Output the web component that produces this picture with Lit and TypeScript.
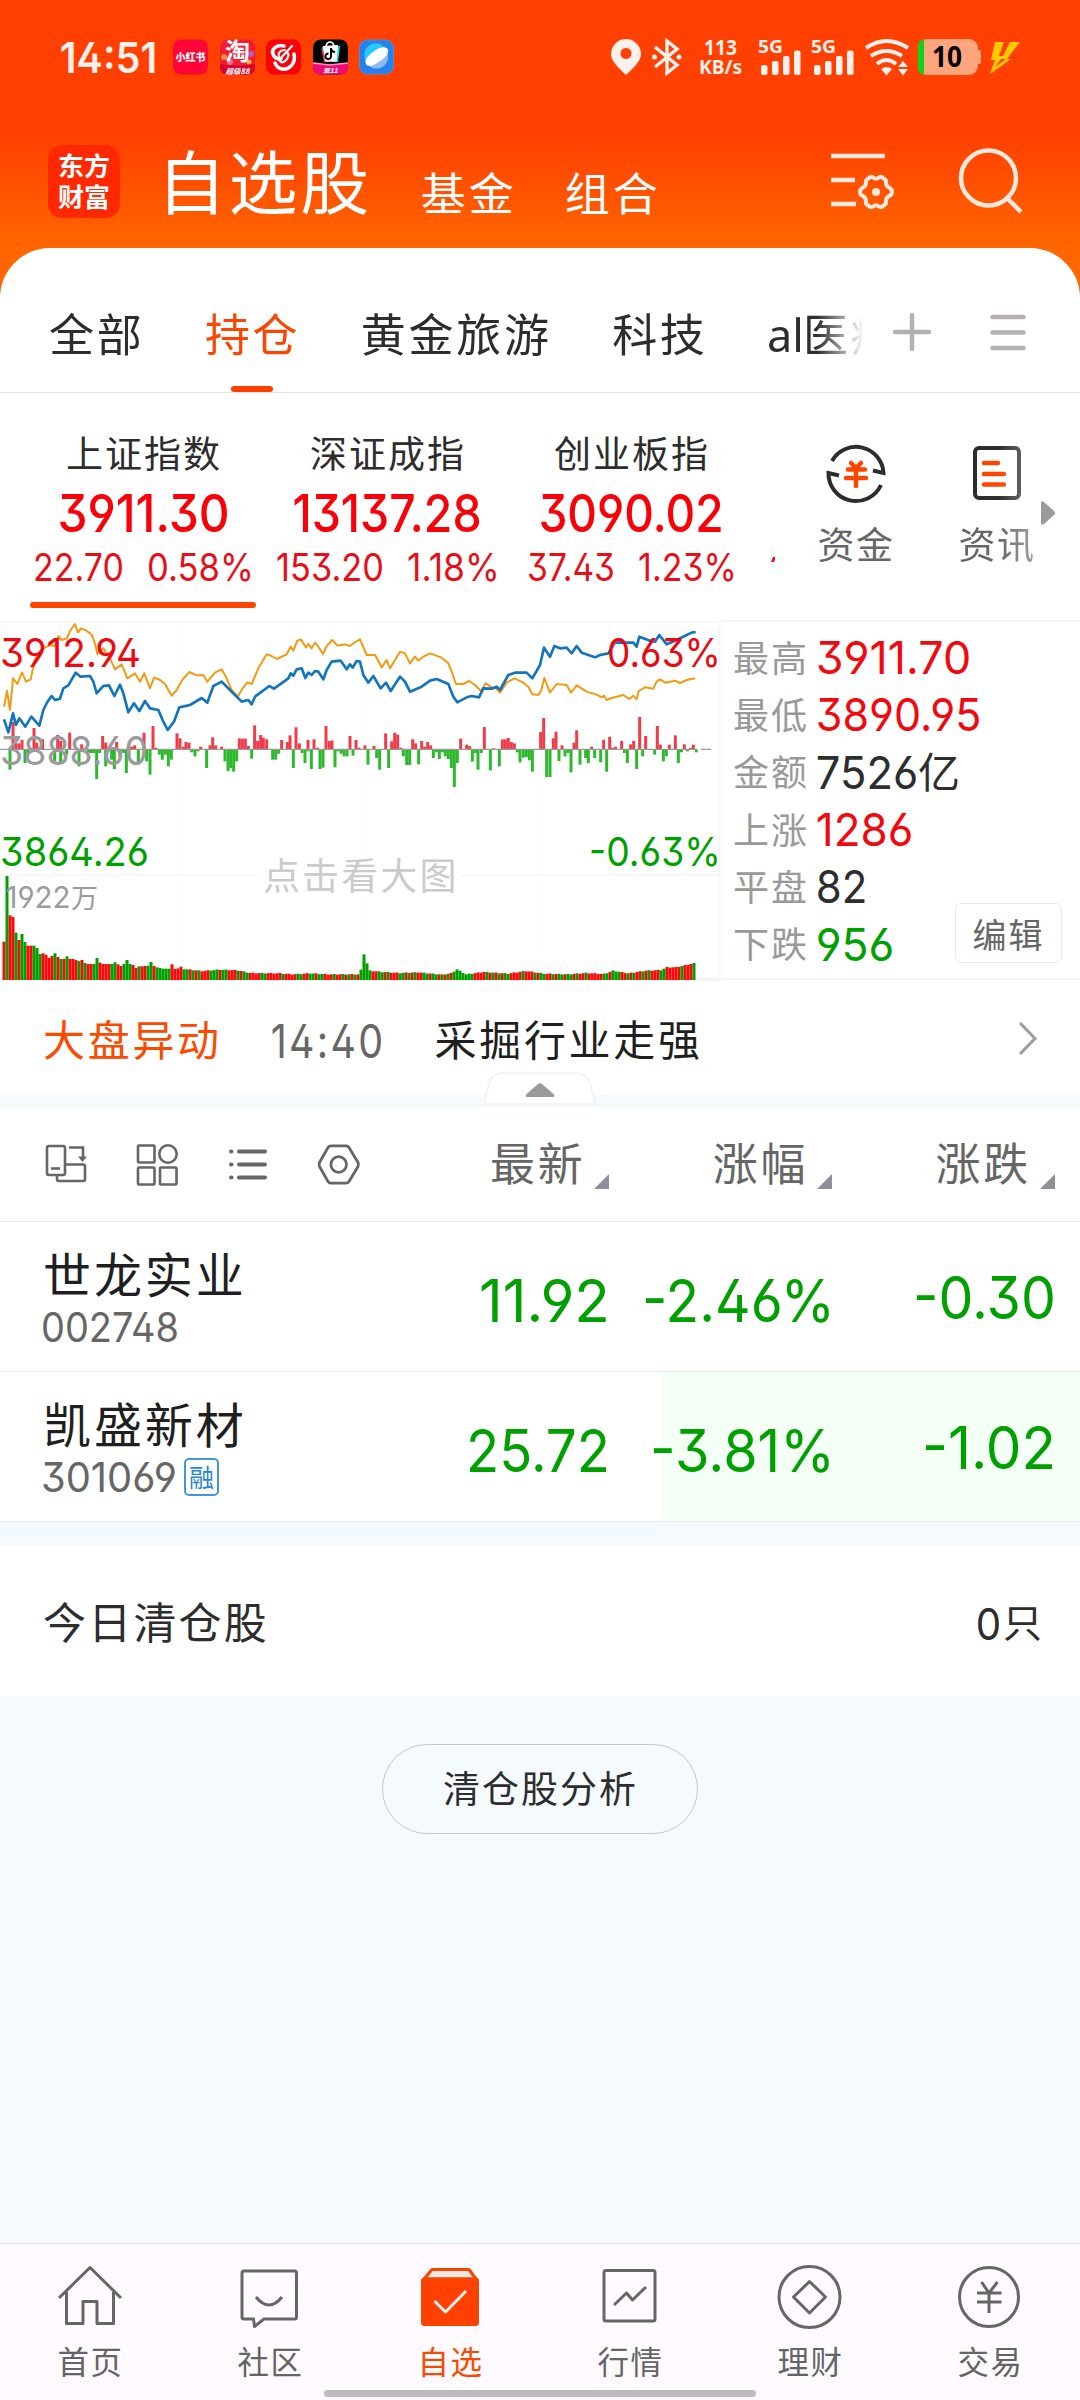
import { LitElement, html, svg, css, nothing } from "lit";
import { customElement } from "lit/decorators.js";

/* Numerals set to an exact measure: the box equals the digits' ink box. */
const num = (text: string, width: number, cap: number, cls = "") => {
  const size = cap / 0.727;
  return html`<svg class="num ${cls}" width=${width} height=${cap} viewBox="0 0 ${width} ${cap}">
    <text x=${-size * 0.05} y=${cap} font-size=${size} textLength=${width + size * 0.1} lengthAdjust="spacingAndGlyphs">${text}</text>
  </svg>`;
};

const numCss = css`
  .num { display: block; overflow: visible; flex: none; fill: currentColor; font-family: Inter, "Noto Sans", sans-serif; font-feature-settings: "cv03", "cv04", "ss01"; }
  .num.medium { font-weight: 500; }
  .num.semi { font-weight: 600; }
  svg { display: block; flex: none; overflow: visible; }
`;

const YELLOW = "12,290 21,243 30,300 39,205 52,222 66,187 78,215 92,208 104,150 115,130 135,112 150,105 165,108 175,78 185,90 200,85 212,60 225,42 234,67 243,55 260,62 275,74 285,100 292,132 310,115 330,145 345,178 365,163 382,205 405,190 420,215 433,190 450,235 462,203 480,210 495,222 515,257 530,240 545,212 568,186 590,196 610,195 622,215 645,188 665,178 680,205 695,240 713,260 728,235 742,217 755,222 775,175 800,133 815,138 830,147 860,133 872,110 880,122 892,92 902,88 918,112 925,102 935,115 945,98 955,110 969,132 980,108 997,90 1012,107 1035,103 1050,108 1066,96 1080,88 1100,135 1125,135 1145,172 1160,150 1170,175 1185,150 1200,125 1215,130 1230,160 1245,140 1255,152 1270,140 1290,130 1325,143 1345,160 1355,185 1368,222 1390,222 1407,213 1425,225 1443,243 1457,220 1475,232 1488,235 1500,248 1520,218 1543,205 1570,218 1585,230 1597,253 1615,255 1623,243 1633,204 1650,248 1670,222 1700,225 1713,248 1730,226 1760,245 1790,254 1805,262 1812,257 1820,270 1835,264 1870,255 1888,267 1900,257 1910,268 1916,243 1935,232 1960,236 1970,215 1980,208 1995,218 2025,212 2040,219 2060,210 2085,205";
const BLUE = "12,328 25,367 39,310 48,345 58,325 76,350 94,320 118,347 130,300 142,276 155,258 165,270 180,266 190,235 205,226 227,188 242,200 270,198 280,215 290,250 310,228 327,226 343,258 360,224 370,250 385,307 402,280 418,303 435,273 450,295 475,300 490,335 503,360 522,335 538,292 570,285 605,264 622,278 640,228 665,215 690,240 725,275 745,270 755,283 765,260 808,228 822,236 865,205 872,190 880,197 890,178 905,175 916,204 925,188 935,195 945,183 955,185 970,208 980,180 995,155 1022,152 1040,178 1050,163 1058,173 1070,153 1080,155 1090,195 1105,218 1120,198 1142,235 1158,218 1172,243 1200,200 1215,215 1230,245 1265,230 1290,212 1310,207 1345,222 1360,260 1372,277 1400,262 1415,258 1437,262 1450,235 1475,236 1490,230 1500,240 1525,195 1545,188 1580,188 1597,205 1620,165 1632,113 1650,140 1663,108 1680,115 1700,113 1715,130 1730,108 1745,128 1785,142 1800,135 1825,130 1845,98 1900,98 1910,110 1918,80 1950,92 1965,95 1978,75 2000,103 2030,90 2060,75 2075,68 2087,66";
const UP = "39:82,48:18,57:18,66:28,102:64,110:20,128:30,173:43,182:25,209:50,227:5,245:15,308:40,317:20,350:22,395:8,404:12,432:50,459:70,468:5,531:48,540:33,550:8,558:22,567:20,602:8,630:12,638:36,647:12,665:8,718:33,727:32,736:32,745:10,764:72,773:25,782:43,790:35,800:30,845:28,862:22,870:42,888:66,898:18,924:28,942:30,953:5,978:70,988:25,996:27,1050:40,1068:28,1077:5,1095:12,1122:10,1157:48,1175:24,1184:50,1193:44,1203:5,1238:30,1247:18,1265:25,1274:8,1283:22,1292:12,1382:32,1400:14,1409:10,1453:67,1480:3,1507:30,1516:30,1525:34,1534:22,1543:18,1622:52,1631:94,1660:33,1668:53,1686:12,1722:20,1730:57,1775:8,1811:29,1829:38,1838:5,1847:8,1865:25,1892:15,1901:25,1919:97,1937:40,1972:70,1981:14,2008:14,2026:42,2053:15,2071:4,2080:14";
const DOWN = "30:60,75:40,84:10,164:35,182:40,200:15,237:50,246:5,265:8,272:10,281:10,290:88,299:10,317:50,335:30,343:58,360:20,370:10,379:70,387:20,415:40,440:35,450:75,478:15,487:30,496:15,505:50,514:30,575:8,585:20,594:5,620:55,675:35,684:64,692:56,701:66,710:35,755:27,818:30,827:30,836:12,880:55,906:10,915:40,924:5,934:58,960:58,969:54,1005:53,1014:5,1023:12,1032:20,1041:20,1059:18,1104:45,1130:25,1139:60,1166:55,1210:20,1220:46,1229:46,1256:44,1300:25,1309:8,1318:28,1327:8,1336:20,1345:28,1354:55,1363:112,1372:40,1417:36,1426:10,1434:60,1444:10,1471:62,1498:50,1552:8,1560:38,1570:24,1579:22,1588:32,1597:66,1640:82,1650:82,1677:34,1695:20,1704:10,1713:68,1740:45,1757:25,1765:40,1784:25,1802:38,1820:66,1873:10,1882:40,1910:58,1928:20,1964:15,1990:35,1999:20,2035:40,2044:8,2062:5,2089:8";
const pairs = (s: string) => s.split(",").map((p) => p.split(":").map(Number));

/* Minute volumes: the opening burst bar by bar, then anchors joined linearly. */
const OPEN_VOL = "r115,g312,r194,r189,g142,r120,g138,g114,r103,r103,g103,g96,g78,r80,r76,r66,r72,g80,r69,g63,r63,g71,r63,r63,r60,g57,r60,g51,r48,r48,g48,g66,r52,r48,r48,r48,g48,g53,r47,r42,g48,g60,g48,r45,r36,g41,r41,r42,g43,g54,r42,g38,g36,g34,g34,g34,r47,r33,r35,r40";
const VOL_ANCHORS = [[60, 33], [66, 27], [72, 31], [78, 29], [82, 21], [92, 20], [96, 17], [102, 20], [108, 17], [118, 17], [119, 30], [120, 78], [121, 50], [122, 28], [126, 24], [132, 21], [138, 23], [146, 16], [149, 20], [151, 32], [154, 17], [160, 24], [168, 19], [174, 27], [180, 19], [188, 17], [194, 21], [200, 18], [203, 28], [208, 20], [214, 28], [219, 30], [221, 38], [224, 38], [228, 46], [230, 50]];
const volumes = (() => {
  const out = OPEN_VOL.split(",").map((v) => ({ up: v[0] === "r", h: Number(v.slice(1)) }));
  const hues = "ggrgrgrrrgggrggrrrgrggrrrrggrrrrrgrrrrggrrggrggrrrgrrgrgrgrg" + "gggrrggrgrrrggrgrgrrggrggrgrgrgggggggrrrrgrgrgrgg" + "rrrrgrrrgrggrrgrggrggrgrrgrrrrrggrgggrrgrgrrgrgrrrggrrrrrgrrrrrg";
  for (let i = out.length; i <= 230; i++) {
    const k = VOL_ANCHORS.findIndex((a) => a[0] >= i);
    const [x1, y1] = VOL_ANCHORS[k];
    const [x0, y0] = VOL_ANCHORS[Math.max(0, k - 1)];
    const h = x1 === x0 ? y1 : y0 + ((y1 - y0) * (i - x0)) / (x1 - x0);
    out.push({ up: i === 120 || i === 230 ? false : hues[(i - 60) % hues.length] === "r", h: h + ((i * 7) % 3) - 1 });
  }
  return out;
})();

@customElement("market-chart")
export class MarketChart extends LitElement {
  static styles = [numCss, css`
    :host { display: block; position: relative; width: 720px; height: 360px; }
    .over { position: absolute; }
    .hi { left: 2px; top: 18px; color: #ec0a12; }
    .mid { left: 2px; top: 116px; color: #9c9a9c; }
    .lo { left: 2px; top: 217px; color: #00a000; }
    .hip { right: 1px; top: 18px; color: #e60a14; }
    .lop { right: 1px; top: 217px; color: #00a000; }
    .vol { left: 7px; top: 259px; display: flex; gap: 2px; align-items: center; height: 36px; color: #9c9a9c; }
    .cjk { font: 27px/36px "Noto Sans CJK SC", sans-serif; }
    .hint { left: 263px; top: 227px; font: 37px/54px "Noto Sans CJK SC", sans-serif; letter-spacing: 2.1px; color: #cbcbcb; }
  `];
  render() {
    return html`
      <svg width="720" height="362" viewBox="0 30 2160 1086">
        <g fill="none" stroke="#f5f5f5" stroke-width="5">
          <path d="M0 36H2160M0 795H770M1383 795H2160M2159 36V1110M0 1111H2160" />
          <path stroke-width="3" stroke-dasharray="3 7" d="M550 40V1110M1087 40V1110M1624 40V1110" />
        </g>
        <g fill="#f03c48">${pairs(UP).map(([x, h]) => svg`<rect x=${x - 4.5} y=${418 - h} width="9" height=${h} />`)}</g>
        <g fill="#2db92d">${pairs(DOWN).map(([x, h]) => svg`<rect x=${x - 4.5} y="419" width="9" height=${h} />`)}</g>
        <path d="M0 418H2092M2103 418H2133" stroke="#9a9a9a" stroke-width="4" />
        <polyline points=${YELLOW} fill="none" stroke="#f09b12" stroke-width="6" stroke-linejoin="round" />
        <polyline points=${BLUE} fill="none" stroke="#1474bc" stroke-width="8" stroke-linejoin="round" />
        ${volumes.map((v, i) => svg`<rect x=${7.5 + i * 9} y=${1110 - v.h} width="9" height=${v.h} fill=${v.up ? "#fa0a0a" : "#00a000"} />`)}
      </svg>
      <div class="over hi">${num("3912.94", 137, 28.5)}</div>
      <div class="over mid">${num("3888.60", 144, 28.5)}</div>
      <div class="over lo">${num("3864.26", 145, 28.5)}</div>
      <div class="over hip">${num("0.63%", 110, 28.5)}</div>
      <div class="over lop">${num("-0.63%", 128, 28.5)}</div>
      <div class="over vol">${num("1922", 62, 22)}<span class="cjk">万</span></div>
      <div class="over hint">点击看大图</div>`;
  }
}

@customElement("status-bar")
export class StatusBar extends LitElement {
  static styles = [numCss, css`
    :host { display: flex; align-items: center; box-sizing: border-box; height: 75px; padding: 39px 60px 0 62px; color: #fff0eb; }
    .apps { display: flex; gap: 11.5px; margin-left: 18px; }
    .sys { display: flex; margin-left: auto; }
    .sys svg { font-family: "Noto Sans", sans-serif; font-weight: 700; }
  `];
  render() {
    return html`
      ${num("14:51", 93, 31, "semi")}
      <div class="apps">
        <svg width="35" height="36" viewBox="0 0 35 36"><rect y=".5" width="35" height="35" rx="8" fill="#ff0436"/><text x="17.5" y="22" text-anchor="middle" font-family="Noto Sans CJK SC, sans-serif" font-weight="900" font-size="10" fill="#fff">小红书</text></svg>
        <svg width="35" height="36" viewBox="0 0 35 36"><rect y=".5" width="35" height="35" rx="8" fill="#f01e32"/><circle cx="4" cy="18" r="3" fill="#ff8a3c"/><circle cx="31" cy="15" r="3" fill="#b45ad8"/><circle cx="29" cy="23" r="2.5" fill="#ffb43c"/><circle cx="10" cy="23" r="3" fill="#ff6e96"/><path d="M0 25Q17 28 35 25V28Q35 35.500 27 35.500H8Q0 35.500 0 28Z" fill="#d8002d"/><text x="17.500" y="21" text-anchor="middle" font-family="Noto Sans CJK SC, sans-serif" font-weight="700" font-size="24" textLength="25" lengthAdjust="spacingAndGlyphs" fill="#fff">淘</text><text x="17.500" y="34.500" text-anchor="middle" font-family="Noto Sans CJK SC, sans-serif" font-style="italic" font-weight="700" font-size="7.500" fill="#fff">超级88</text></svg>
        <svg width="35" height="36" viewBox="0 0 35 36"><rect y=".5" width="35" height="35" rx="8" fill="#fa000a"/><g fill="none" stroke="#fff" stroke-linecap="round"><path stroke-width="3.500" d="M18 7C10 5 5 11 7 15C8 19 12 20 15 20"/><path stroke-width="3.500" d="M9 24C12 31 20 32 25 27C29 23 29 19 28 15"/><path stroke-width="2.200" d="M26 7L14 20C13 24 17 24 19 22C22 20 23 16 22 14M19 11C14 11 12 14 13 17"/></g></svg>
        <svg width="35" height="36" viewBox="0 0 35 36"><rect y=".5" width="35" height="35" rx="8" fill="#000"/><path d="M0 24L17 26L35 24V28Q35 35.500 27 35.500H8Q0 35.500 0 28Z" fill="#f00a78"/><path d="M0 24L17 26L35 24" stroke="#ff96b4" stroke-width="1.500" fill="none"/><path d="M9 8L12 23L25 23L27 7Z" fill="#1ee6e6"/><path d="M8 9L11 23H20Z" fill="#ff2864"/><path d="M10 7L25 6L23.500 22.500H12Z" fill="#fff"/><path d="M13 7Q14 3 17 3Q20 3 21 7" stroke="#fff" stroke-width="1.700" fill="none"/><path d="M18 9V17A2.800 2.800 0 1 1 15.500 14.500M18 10Q19 13 22 13" fill="none" stroke="#000" stroke-width="2"/><text x="17.500" y="34" text-anchor="middle" font-family="Noto Sans CJK SC, sans-serif" font-style="italic" font-weight="900" font-size="6.500" fill="#fff">双11</text></svg>
        <svg width="35" height="36" viewBox="0 0 35 36"><rect x=".5" y="1" width="34" height="34" rx="8" fill="#2382eb" stroke="#5a8cd2"/><circle cx="17.500" cy="18" r="11.500" fill="#8cb9f5"/><path d="M6 20A11.500 11.500 0 0 1 26 9L10 21Z" fill="#28c8ff"/><path d="M7 25C5 21 9 16 16 11.500C22 7.500 28 7 29 11C30 15 25 20 19 23.500C14 27 9 28.500 7 25Z" fill="#fff"/></svg>
      </div>
      <div class="sys">
        <svg width="410" height="38" viewBox="610 38 410 38" fill="#fff0eb">
          <path fill-rule="evenodd" d="M626 39a15 15 0 0 1 15 15c0 8-9 15-15 21c-6-6-15-13-15-21a15 15 0 0 1 15-15Zm0 9a5.500 5.500 0 1 0 .01 0Z"/>
          <g fill="none" stroke="#fff0eb" stroke-width="3.400"><path d="M655 47L677 65L667 73V41L677 49L655 67"/></g><circle cx="654.500" cy="57" r="2.500"/><circle cx="679" cy="57" r="2.500"/>
          <text x="704" y="55" font-size="21" textLength="33" lengthAdjust="spacingAndGlyphs">113</text>
          <text x="699" y="74" font-size="19" textLength="43" lengthAdjust="spacingAndGlyphs">KB/s</text>
          ${[0, 53].map((d) => svg`<g transform="translate(${d} 0)"><text x="758" y="52.500" font-size="18" textLength="25" lengthAdjust="spacingAndGlyphs">5G</text><rect x="761" y="65" width="6.500" height="10" rx="2"/><rect x="772" y="61" width="6.500" height="14" rx="2"/><rect x="783" y="56" width="6.500" height="19" rx="2"/><rect x="794" y="50.500" width="6.500" height="24.500" rx="2"/></g>`)}
          <g fill="none" stroke="#fff0eb" stroke-width="4"><path d="M866 48Q886.500 34 908 48M871 56Q886.500 46 902 56M877 64Q886.500 56 896 64"/></g>
          <path d="M881 69Q886.500 65 892 69L886.500 75.500ZM898 67L903 61L908 67ZM898 69H908L903 75.500Z"/>
          <rect x="918" y="39" width="60" height="36" rx="9" fill="#ffa57d"/><rect x="976" y="50" width="5" height="14" rx="2" fill="#ffa57d"/>
          <path d="M924 39V75Q918 74 918 66V48Q918 40 924 39Z" fill="#0cd41e"/>
          <text x="932" y="67" font-size="28" fill="#000" textLength="30" lengthAdjust="spacingAndGlyphs">10</text>
          <path d="M995 42H1004L999 56H1003L1010 42H1020L1007 59H1011L990 74L995 60H991ZM1001 59L995 67L1006 59Z" fill="#ffc800"/>
        </svg>
      </div>`;
  }
}

const NAV = [
  ["首页", svg`<path d="M9 38L40 7.500L71 38M16.500 32V63.500H33V41.500H47V63.500H63.500V32"/>`],
  ["社区", svg`<path d="M14 11H64.500Q66.500 11 66.500 13V57Q66.500 59 64.500 59H34L24.500 66.500L23.500 59H14Q12 59 12 57V13Q12 11 14 11ZM26 37Q39 53 52 37"/>`],
  ["自选", svg`<path d="M22 9.500H59L66 19H14Z" fill="#f0e8e4"/><rect x="12.500" y="19" width="55" height="45.500" rx="2" fill="#ff4000"/><path d="M24.500 41L35.500 52L56 31" stroke="#fff0e8"/>`],
  ["行情", svg`<rect x="14" y="10.500" width="51" height="50.500" rx="2"/><path d="M24 45L36.500 33L42.500 40L56 27"/>`],
  ["理财", svg`<circle cx="39.500" cy="37" r="30.500"/><path d="M39.500 21.500L55.500 37L39.500 53L23.500 37Z"/>`],
  ["交易", svg`<circle cx="39" cy="37" r="29.500"/><path d="M31.500 22L39 33L47.500 22M39 33V53M27 33H51.500M27 42H51.500"/>`],
] as const;

const INDICES = [
  { name: "上证指数", v: ["3911.30", 167], a: ["22.70", 87], b: ["0.58%", 103], on: true },
  { name: "深证成指", v: ["13137.28", 184], a: ["153.20", 104], b: ["1.18%", 89] },
  { name: "创业板指", v: ["3090.02", 180], a: ["37.43", 84], b: ["1.23%", 95] },
] as { name: string; v: [string, number]; a: [string, number]; b: [string, number]; on?: boolean }[];

const STATS: [string, string, number, string, string?][] = [
  ["最高", "3911.70", 151, "red"],
  ["最低", "3890.95", 161, "red"],
  ["金额", "7526", 98, "ink", "亿"],
  ["上涨", "1286", 93, "red"],
  ["平盘", "82", 47, "ink"],
  ["下跌", "956", 74, "green"],
];

const STOCKS = [
  { name: "世龙实业", code: ["002748", 134], last: ["11.92", 125], pct: ["-2.46%", 187], chg: ["-0.30", 137] },
  { name: "凯盛新材", code: ["301069", 132], last: ["25.72", 138], pct: ["-3.81%", 179], chg: ["-1.02", 128], flash: true },
] as { name: string; code: [string, number]; last: [string, number]; pct: [string, number]; chg: [string, number]; flash?: boolean }[];

@customElement("app-root")
export class AppRoot extends LitElement {
  static styles = [numCss, css`
    :host { display: flex; flex-direction: column; width: 1080px; height: 2400px; overflow: hidden; box-sizing: border-box;
      font-family: "Noto Sans CJK SC", sans-serif; color: #2d2d2d; background: #f5faff; }
    * { box-sizing: border-box; white-space: nowrap; }
    .red { color: #f00a10; } .green { color: #00a000; } .ink { color: #2d2d2d; }
    .top { height: 300px; flex: none; background: linear-gradient(#ff4000 135px, #ff6600 249px); color: #fff; margin-bottom: -52px; }
    .title { display: flex; align-items: flex-start; height: 104px; padding: 0 60px 0 48px; margin-top: 60px; }
    .logo { width: 72px; height: 73px; margin-top: 10px; border-radius: 14px; background: #ff2800; display: grid; place-content: center; text-align: center; font-weight: 700; font-size: 26px; line-height: 31px; padding-bottom: 3px; }
    .t1 { font-size: 69px; line-height: 100px; letter-spacing: 2.600px; margin: -6px 0 0 37px; }
    .t2 { font-size: 45px; line-height: 66px; letter-spacing: 3px; margin: 24px 0 0 49px; }
    .t2 + .t2 { margin-left: 48px; }
    .title .filter { margin: 17px 64px 0 auto; }
    .title .search { margin: 15px -2px 0 0; }
    .sheet { position: relative; flex: none; height: 1448px; background: #fff; border-radius: 50px 50px 0 0; display: flex; flex-direction: column; }
    .tabs { height: 145px; border-bottom: 1px solid #e4e4e4; display: flex; align-items: stretch; padding-left: 49px; font-size: 45px; line-height: 66px; letter-spacing: 2.700px; }
    .strip { display: flex; width: 817px; overflow: hidden; -webkit-mask-image: linear-gradient(90deg, #000 768px, transparent 815px); mask-image: linear-gradient(90deg, #000 768px, transparent 815px); }
    .tab { flex: none; display: flex; flex-direction: column; align-items: center; padding-top: 52px; margin-right: 60.500px; }
    .tab.on { color: #fa4600; }
    .tab.on::after { content: ""; width: 42px; height: 6px; border-radius: 3px; background: #ff4000; margin: 20px 2px 0 0; }
    .latin { font-family: "Noto Sans", sans-serif; letter-spacing: 0; margin: 0 -1px 0 -1px; }
    .plus { margin: 64px 0 0 26px; } .menu { margin: 64px 0 0 58px; }
    .indices { display: flex; height: 228px; }
    .viewport { display: flex; width: 775px; overflow: hidden; padding-left: 30px; gap: 18px; }
    .idx { flex: none; width: 226px; display: flex; flex-direction: column; align-items: center; padding-top: 32px; }
    .idx .name { font-size: 37px; line-height: 54px; letter-spacing: 2px; margin-right: -2px; }
    .idx .v { margin-top: 14.500px; color: #fa0008; }
    .idx .pair { display: flex; gap: 27px; margin: 22px 0 0 1px; color: #e60f19; }
    .idx.on::after { content: ""; width: 226px; height: 6px; border-radius: 3px; background: #ff4600; margin-top: 21.500px; }
    .peek { flex: none; width: 3px; height: 5px; margin: 164px 0 0 10px; background: #e60f19; transform: skewX(-20deg); }
    .quick { display: flex; padding-left: 42px; font-size: 37px; line-height: 52px; letter-spacing: 1.500px; color: #666; }
    .q { display: flex; flex-direction: column; align-items: center; width: 78px; margin-right: 63px; padding-top: 49px; }
    .q span { margin-top: 12.500px; }
    .q.fade { margin-right: 4px; -webkit-mask-image: linear-gradient(90deg, #000 40px, rgba(0,0,0,.6)); mask-image: linear-gradient(90deg, #000 40px, rgba(0,0,0,.6)); }
    .arrow { margin-top: 107px; }
    .market { display: flex; height: 360px; border-bottom: 2px solid #f5f5f5; }
    .stats { position: relative; flex: 1; border-top: 2px solid #f5f5f5; padding: 6.500px 0 0 13px; }
    .stat { display: flex; align-items: center; height: 57.300px; gap: 9.500px; }
    .stat .k { font-size: 36px; line-height: 52px; letter-spacing: 1.900px; color: #999; margin-top: -4px; width: 75px; }
    .stat .u { font-size: 42px; line-height: 52px; margin: -4px 0 0 -7px; }
    .edit { position: absolute; right: 18px; bottom: 15px; width: 107px; height: 60px; border: 1.500px solid #eaeaea; border-radius: 6px; background: #fff; display: grid; place-content: center; font-size: 34px; letter-spacing: 2px; line-height: 50px; color: #666; padding: 1px 0 0 0; }
    .news { position: relative; display: flex; align-items: flex-start; height: 115px; padding-left: 43px; font-size: 42px; line-height: 60px; letter-spacing: 2.700px; padding-top: 27.500px; }
    .news .tag { color: #fa4b00; width: 229.500px; }
    .news .time { color: #666; margin-top: 16px; width: 162px; }
    .news .head { color: #1f1f1f; flex: 1; }
    .news .go { margin: 14.500px 43px 0 0; }
    .fold { position: absolute; left: 484px; top: 92px; z-index: 1; }
    .gap { background: #f5faff; flex: none; }
    .g1 { height: 12px; } .g2 { height: 24px; }
    .tools { display: flex; align-items: flex-start; height: 115px; border-bottom: 1px solid #ebebeb; color: #666; padding: 37px 25px 0 45px; flex: none; }
    .tools .ic { width: 42px; margin-right: 49px; }
    .tools .ic:nth-child(4) { margin-right: 130px; }
    .cols { flex: 1; display: flex; justify-content: space-between; }
    .col { display: flex; font-size: 45px; line-height: 66px; letter-spacing: 2.700px; margin-top: -15px; }
    .col svg { margin: 45px 0 0 9px; }
    .row { display: flex; height: 150px; border-bottom: 1px solid #ebebeb; flex: none; }
    .who { width: 300px; padding: 15px 0 0 43px; }
    .who .name { font-size: 48px; line-height: 70px; letter-spacing: 2.900px; color: #1f1f1f; }
    .who .code { display: flex; align-items: center; gap: 9px; height: 38px; color: #666; padding-left: 0; margin-top: 1px; }
    .badge { width: 35px; height: 38px; border: 2px solid #4696d2; border-radius: 5px; color: #2887cd; font-size: 25px; line-height: 32px; text-align: center; }
    .last { width: 307px; display: flex; justify-content: flex-end; padding-top: 56.500px; }
    .hot { display: flex; flex: 1; margin-left: 54px; padding: 56.500px 27px 0 0; }
    .flash .hot { background: #f4fff5; }
    .hot .pct { width: 171px; display: flex; justify-content: flex-end; }
    .hot .chg { flex: 1; display: flex; justify-content: flex-end; margin-top: -3px; }
    .today { display: flex; height: 150px; padding: 42.500px 38px 0 43px; justify-content: space-between; font-size: 43px; line-height: 62px; letter-spacing: 2.200px; }
    .today .n { display: flex; gap: 4px; letter-spacing: 0; font-size: 39px; }
    .today .n svg { margin-top: 19px; }
    .body { flex: 1; display: flex; justify-content: center; align-items: flex-start; padding-top: 48px; }
    .pill { width: 316px; height: 90px; border: 1.500px solid #c8c8c8; border-radius: 45px; text-align: center; font-size: 37px; line-height: 85px; letter-spacing: 2px; padding-left: 1px; }
    .nav { position: relative; height: 157px; flex: none; border-top: 1px solid #e2e2e2; background: #fffaff; display: flex; }
    .item { flex: 1; display: flex; flex-direction: column; align-items: center; padding-top: 16px; color: #646464; font-size: 31.500px; line-height: 46px; letter-spacing: 1.500px; }
    .item span { margin: 1.500px -1px 0 0; }
    .item svg { fill: none; stroke: #666; stroke-width: 3; stroke-linejoin: round; }
    .item.on { color: #f54b00; } .item.on svg { stroke: #f54600; }
    .bar { position: absolute; left: 324px; bottom: 3px; width: 432px; height: 7px; border-radius: 4px; background: #bcbcbc; }
  `];

  render() {
    const corner = html`<svg width="15" height="15"><path d="M15 0V15H0Z" fill="#8c9098"/></svg>`;
    return html`
      <header class="top">
        <status-bar></status-bar>
        <div class="title">
          <div class="logo"><span>东方</span><span>财富</span></div>
          <div class="t1">自选股</div>
          <div class="t2">基金</div>
          <div class="t2">组合</div>
          <svg class="filter" width="64" height="58" viewBox="0 0 64 58" fill="none" stroke="#ffe9dc" stroke-width="4.500">
            <path d="M1 4H55M1 28H25M1 52H26"/>
            <path stroke-width="4" stroke-linejoin="round" d="M39 26Q41 24 43 25.500Q46 28 49 25.500Q51 24 53 26Q57 28 56 31Q56 34 59 35.500Q62 37 62 40Q62 43 59 44Q56 46 56 49Q57 52 53 54Q51 56 49 54.500Q46 52 43 54.500Q41 56 39 54Q35 52 36 49Q36 46 33 44Q30 43 30 40Q30 37 33 35.500Q36 34 36 31Q35 28 39 26Z"/>
            <circle cx="46" cy="40" r="4" fill="#ffe9dc" stroke="none"/>
          </svg>
          <svg class="search" width="64" height="66" viewBox="0 0 64 66" fill="none" stroke="#ffe9dc" stroke-width="4.500"><circle cx="30.500" cy="28" r="27.500"/><path d="M49 48L63 62"/></svg>
        </div>
      </header>

      <main class="sheet">
        <nav class="tabs">
          <div class="strip">
            <div class="tab">全部</div>
            <div class="tab on">持仓</div>
            <div class="tab">黄金旅游</div>
            <div class="tab">科技</div>
            <div class="tab"><div><span class="latin">al</span>医疗</div></div>
          </div>
          <svg class="plus" width="40" height="40" viewBox="0 0 40 40" stroke="#b4b0b4" stroke-width="4.500" stroke-linecap="round"><path d="M3 20H37M20 3V37"/></svg>
          <svg class="menu" width="36" height="40" viewBox="0 0 36 40" stroke="#b4b0b4" stroke-width="4.500" stroke-linecap="round"><path d="M2.500 5H33.500M2.500 20.500H33.500M2.500 36H33.500"/></svg>
        </nav>

        <section class="indices">
          <div class="viewport">
            ${INDICES.map((i) => html`
              <div class="idx ${i.on ? "on" : ""}">
                <div class="name">${i.name}</div>
                <div class="v">${num(i.v[0], i.v[1], 37.5, "medium")}</div>
                <div class="pair">${num(i.a[0], i.a[1], 27.5)}${num(i.b[0], i.b[1], 27.5)}</div>
              </div>`)}
            <i class="peek"></i>
          </div>
          <div class="quick">
            <div class="q">
              <svg width="60" height="62" viewBox="-30 -31 60 62" fill="none" stroke="#2d2d2d" stroke-width="4">
                <path d="M-24 -12A27.500 27.500 0 0 1 27.500 0L17 -2.500M25 12A27.500 27.500 0 0 1 -27.500 0L-17 2.500"/>
                <path stroke="#fa4600" stroke-width="4.500" stroke-linecap="round" d="M-5 -10L0 -5L5 -10M0 -5V13M-8 -3.500H9M-10 5H10"/>
              </svg>
              <span>资金</span>
            </div>
            <div class="q fade">
              <svg width="60" height="62" viewBox="-30 -31 60 62" fill="none" stroke="#2d2d2d" stroke-width="4">
                <rect x="-22" y="-25" width="44" height="50" rx="4"/>
                <path stroke="#fa4600" stroke-width="4.500" stroke-linecap="round" d="M-13 -10H1M-13 1H7M-13 11.500H7"/>
              </svg>
              <span>资讯</span>
            </div>
            <svg class="arrow" width="16" height="26" viewBox="0 0 16 26"><path d="M1 3Q1 0 4 2L14 11Q16 13 14 15L4 24Q1 26 1 23Z" fill="#9c9a9c"/></svg>
          </div>
        </section>

        <section class="market">
          <market-chart></market-chart>
          <div class="stats">
            ${STATS.map(([k, v, w, c, u]) => html`<div class="stat"><span class="k">${k}</span><span class=${c}>${num(v, w, 33)}</span>${u ? html`<span class="u">${u}</span>` : nothing}</div>`)}
            <div class="edit">编辑</div>
          </div>
        </section>

        <section class="news">
          <span class="tag">大盘异动</span>
          <span class="time">${num("14:40", 110, 34)}</span>
          <span class="head">采掘行业走强</span>
          <svg class="go" width="18" height="33" viewBox="0 0 18 33" fill="none" stroke="#9c9a9c" stroke-width="3"><path d="M1 1L16 16.500L1 32"/></svg>
          <svg class="fold" width="112" height="33" viewBox="0 0 112 33"><path d="M0 32L5 11Q8 1 18 1H92Q102 1 106 11L111 32Z" fill="#fff" stroke="#f3f0f3" stroke-width="1.500"/><path d="M54 12Q56 10.500 58 12L70 22.500Q71 25 69 25H43Q41 25 42 22.500Z" fill="#9c9a9c"/></svg>
        </section>
        <div class="gap g1"></div>

        <section class="tools">
          <svg class="ic" width="42" height="41" viewBox="0 0 42 41" fill="none" stroke="#666" stroke-width="2.600"><rect x="2" y="2" width="18" height="29" rx="2"/><path d="M20 20.500H38Q40 20.500 40 22.500V35Q40 37 38 37H14Q12 37 12 35V31M24 3.500H38V15"/><path d="M6 24.500H15"/><path d="M33 12.500H42L37.500 18Z" fill="#666" stroke="none"/></svg>
          <svg class="ic" width="42" height="42" viewBox="0 0 42 42" fill="none" stroke="#666" stroke-width="2.600"><rect x="2" y="1.500" width="16.500" height="17" rx="1"/><circle cx="32" cy="10" r="8.700"/><rect x="2" y="23.500" width="16.500" height="17" rx="1"/><rect x="24" y="23.500" width="16.500" height="17" rx="1"/></svg>
          <svg class="ic" width="42" height="41" viewBox="0 0 42 41" stroke="#666" stroke-width="4" stroke-linecap="round"><path d="M12 7.500H38M12 20.500H38M12 33.500H38M4 7.500H4.500M4 20.500H4.500M4 33.500H4.500"/></svg>
          <svg class="ic" width="42" height="41" viewBox="0 0 42 41" fill="none" stroke="#666" stroke-width="2.800"><path d="M13 1.800H28Q30 1.800 31 3.500L40 18.500Q41 20.500 40 22.500L31 37.500Q30 39.200 28 39.200H13Q11 39.200 10 37.500L1.500 22.500Q.5 20.500 1.500 18.500L10 3.500Q11 1.800 13 1.800Z"/><circle cx="20.700" cy="20.500" r="7.800"/></svg>
          <div class="cols">
            <div class="col">最新${corner}</div><div class="col">涨幅${corner}</div><div class="col">涨跌${corner}</div>
          </div>
        </section>

        ${STOCKS.map((s) => html`
          <section class="row ${s.flash ? "flash" : ""}">
            <div class="who">
              <div class="name">${s.name}</div>
              <div class="code">${num(s.code[0], s.code[1], 30)}${s.flash ? html`<span class="badge">融</span>` : nothing}</div>
            </div>
            <div class="last green">${num(s.last[0], s.last[1], 43)}</div>
            <div class="hot green">
              <div class="pct">${num(s.pct[0], s.pct[1], 43)}</div>
              <div class="chg">${num(s.chg[0], s.chg[1], 43)}</div>
            </div>
          </section>`)}
        <div class="gap g2"></div>

        <section class="today"><span>今日清仓股</span><span class="n">${num("0", 21, 32)}只</span></section>
      </main>

      <div class="body"><div class="pill">清仓股分析</div></div>

      <footer class="nav">
        ${NAV.map(([label, icon]) => html`<div class="item ${label === "自选" ? "on" : ""}"><svg width="80" height="75" viewBox="0 0 80 75">${icon}</svg><span>${label}</span></div>`)}
        <i class="bar"></i>
      </footer>`;
  }
}
